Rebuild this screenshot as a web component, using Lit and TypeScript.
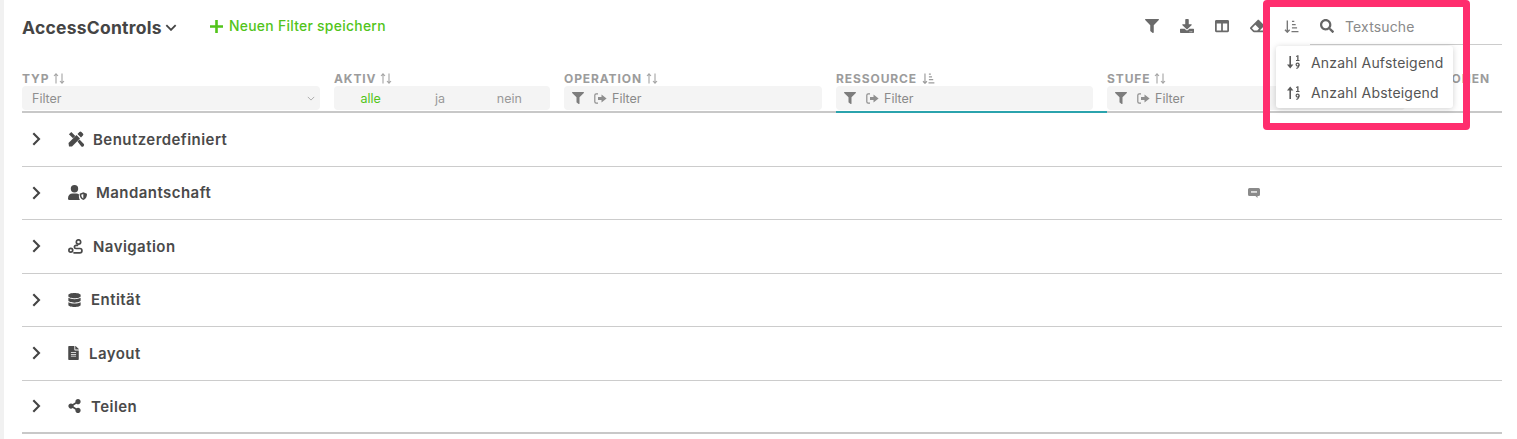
import { LitElement, html, css, svg } from "lit";
import { customElement } from "lit/decorators.js";

const FA = {
  filter: ["0 0 512 512", "M487.976 0H24.028C2.71 0-8.047 25.866 7.058 40.971L192 225.941V432c0 7.831 3.821 15.17 10.237 19.662l80 55.98C298.02 518.69 320 507.493 320 487.98V225.941l184.947-184.97C520.021 25.896 509.338 0 487.976 0z"],
  search: ["0 0 512 512", "M505 442.7L405.3 343c-4.5-4.5-10.6-7-17-7H372c27.6-35.3 44-79.7 44-128C416 93.1 322.9 0 208 0S0 93.1 0 208s93.1 208 208 208c48.3 0 92.7-16.4 128-44v16.3c0 6.4 2.5 12.5 7 17l99.7 99.7c9.4 9.4 24.6 9.4 33.9 0l28.3-28.3c9.4-9.4 9.4-24.6.1-34zM208 336c-70.7 0-128-57.2-128-128 0-70.7 57.2-128 128-128 70.7 0 128 57.2 128 128 0 70.7-57.2 128-128 128z"],
  download: ["0 0 512 512", "M216 0h80c13.3 0 24 10.7 24 24v168h87.7c17.8 0 26.7 21.5 14.1 34.1L269.7 378.3c-7.5 7.5-19.8 7.5-27.3 0L90.1 226.1c-12.6-12.6-3.7-34.1 14.1-34.1H192V24c0-13.3 10.7-24 24-24zm296 376v112c0 13.3-10.7 24-24 24H24c-13.3 0-24-10.7-24-24V376c0-13.3 10.7-24 24-24h146.7l49 49c20.1 20.1 52.5 20.1 72.6 0l49-49H488c13.3 0 24 10.7 24 24zm-124 88c0-11-9-20-20-20s-20 9-20 20 9 20 20 20 20-9 20-20zm64 0c0-11-9-20-20-20s-20 9-20 20 9 20 20 20 20-9 20-20z"],
  columns: ["0 0 512 512", "M464 32H48C21.49 32 0 53.49 0 80v352c0 26.51 21.49 48 48 48h416c26.51 0 48-21.49 48-48V80c0-26.51-21.49-48-48-48zM224 416H64V160h160v256zm224 0H288V160h160v256z"],
  eraser: ["0 0 512 512", "M497.941 273.941c18.745-18.745 18.745-49.137 0-67.882l-160-160c-18.745-18.745-49.136-18.746-67.883 0l-256 256c-18.745 18.745-18.745 49.137 0 67.882l96 96A48.004 48.004 0 0 0 144 480h356c6.627 0 12-5.373 12-12v-40c0-6.627-5.373-12-12-12H355.883l142.058-142.059zm-302.627-62.627l137.373 137.373L265.373 416H150.628l-80-80 124.686-124.686z"],
  file: ["0 0 384 512", "M224 136V0H24C10.7 0 0 10.7 0 24v464c0 13.3 10.7 24 24 24h336c13.3 0 24-10.7 24-24V160H248c-13.2 0-24-10.8-24-24zm64 236c0 6.6-5.4 12-12 12H108c-6.6 0-12-5.4-12-12v-8c0-6.6 5.4-12 12-12h168c6.6 0 12 5.4 12 12v8zm0-64c0 6.6-5.4 12-12 12H108c-6.6 0-12-5.4-12-12v-8c0-6.6 5.4-12 12-12h168c6.6 0 12 5.4 12 12v8zm0-72v8c0 6.6-5.4 12-12 12H108c-6.6 0-12-5.4-12-12v-8c0-6.6 5.4-12 12-12h168c6.6 0 12 5.4 12 12zm96-114.1v6.1H256V0h6.1c6.4 0 12.5 2.5 17 7l97.9 98c4.5 4.5 7 10.6 7 16.9z"],
  share: ["0 0 448 512", "M352 320c-22.608 0-43.387 7.819-59.79 20.895l-102.486-64.054a96.551 96.551 0 0 0 0-41.683l102.486-64.054C308.613 184.181 329.392 192 352 192c53.019 0 96-42.981 96-96S405.019 0 352 0s-96 42.981-96 96c0 7.158.79 14.13 2.276 20.841L155.79 180.895C139.387 167.819 118.608 160 96 160c-53.019 0-96 42.981-96 96s42.981 96 96 96c22.608 0 43.387-7.819 59.79-20.895l102.486 64.054A96.301 96.301 0 0 0 256 416c0 53.019 42.981 96 96 96s96-42.981 96-96-42.981-96-96-96z"],
  database: ["0 0 448 512", "M448 73.143v45.714C448 159.143 347.667 192 224 192S0 159.143 0 118.857V73.143C0 32.857 100.333 0 224 0s224 32.857 224 73.143zM448 176v102.857C448 319.143 347.667 352 224 352S0 319.143 0 278.857V176c48.125 33.143 136.208 48.572 224 48.572S399.874 209.143 448 176zm0 160v102.857C448 479.143 347.667 512 224 512S0 479.143 0 438.857V336c48.125 33.143 136.208 48.572 224 48.572S399.874 369.143 448 336z"],
} as const;

const fa = (k: keyof typeof FA, w: number, h: number = w) =>
  html`<svg class="ic" width=${w} height=${h} viewBox=${FA[k][0]} fill="currentColor"><path d=${FA[k][1]}></path></svg>`;

const sortArrows = html`<svg class="ic arrows" width="12" height="11" viewBox="0 0 12 11" fill="none" stroke="currentColor" stroke-width="1.1">
  <path d="M3 10.5V1M1 3l2-2.2L5 3M9 .5V10M7 8l2 2.2L11 8"></path></svg>`;

const sortAmount = (w: number, h: number) => html`<svg class="ic" width=${w} height=${h} viewBox="0 0 16 14" fill="none" stroke="currentColor" stroke-width="1.5">
  <path d="M3.5 0.500V13M1 10.500l2.500 2.600 2.500-2.600"></path>
  <path d="M8.500 1.500h2.500M8.500 5h4M8.500 8.500h5.500M8 12.500h7.500"></path></svg>`;

const sortNumeric = (up: boolean) => html`<svg class="ic" width="13" height="14" viewBox="0 0 13 14" fill="currentColor">
  ${up
    ? svg`<path d="M3.2 13V2" stroke="currentColor" stroke-width="1.6"></path><path d="M0 4.4L3.2 .6l3.2 3.8z"></path>`
    : svg`<path d="M3.2 1v11" stroke="currentColor" stroke-width="1.6"></path><path d="M0 9.6l3.2 3.8 3.2-3.8z"></path>`}
  <path d="M9 1l1.6-.8h.9V5h1v1H9V5h1.2V1.6L9 2z"></path>
  <circle cx="10.6" cy="9.6" r="1.5" fill="none" stroke="currentColor" stroke-width="1.2"></circle>
  <path d="M12 9.6c0 2-.8 3.4-2.6 3.9" fill="none" stroke="currentColor" stroke-width="1.2"></path></svg>`;

const signIn = html`<svg class="ic" width="13" height="11" viewBox="0 0 13 11" fill="none" stroke="currentColor">
  <path d="M4 .8H2.200Q.8.8.8 2.200v6.600q0 1.400 1.400 1.400H4" stroke-width="1.2"></path>
  <path d="M4 4h3.500V1.400L12.600 5.500 7.500 9.600V7H4z" fill="currentColor" stroke="none"></path></svg>`;

const tools = html`<svg class="ic" width="17" height="16" viewBox="0 0 17 16" fill="currentColor">
  <path d="M1 15.500L.5 12 8.500 4 12 7.500l-8 8zM9.500 3l1.900-1.900a1.400 1.400 0 0 1 2 0l1.500 1.500a1.400 1.400 0 0 1 0 2L13 6.500z"></path>
  <path d="M.9 3.300L3.300.9l4 4L5 7.300zM9.500 10.500l2-2 4.100 4.300a1.700 1.700 0 0 1-2.400 2.400z"></path>
</svg>`;

const userShield = html`<svg class="ic" width="19" height="15" viewBox="0 0 19 15" fill="currentColor">
  <circle cx="6.500" cy="3.800" r="3.700"></circle>
  <path d="M0 13.400C0 10.500 2 8.600 4.500 8.600h4c1 0 1.700.2 2.400.6v2.300c0 1.300.3 2.500 1 3.500H1.400A1.400 1.400 0 0 1 0 13.400z"></path>
  <path fill-rule="evenodd" d="M15.300 7.300l3.700 1.500c0 3-.9 5-3.700 6.200-2.800-1.200-3.700-3.200-3.700-6.200zm0 1.700l-2 .8c.1 1.800.6 2.900 2 3.700z"></path>
</svg>`;

const route = html`<svg class="ic" width="15" height="15" viewBox="0 0 15 15" fill="none" stroke="currentColor" stroke-width="1.700">
  <circle cx="10.500" cy="3" r="2.200"></circle>
  <circle cx="2.800" cy="11.300" r="1.900"></circle>
  <path d="M6 13.800h5.800a2 2 0 0 0 0-4.300H8a1.600 1.600 0 0 1 0-3.200h1.500" stroke-linecap="round"></path>
</svg>`;

const chevron = html`<svg class="ic" width="9" height="14" viewBox="0 0 9 14" fill="none" stroke="currentColor" stroke-width="2.100">
  <path d="M1.300 1.200L7 7l-5.700 5.800"></path></svg>`;

const smallDown = (w: number, h: number, sw: number) => html`<svg class="ic" width=${w} height=${h} viewBox="0 0 10 6" fill="none" stroke="currentColor" stroke-width=${sw}>
  <path d="M1 1l4 4 4-4"></path></svg>`;

const comment = html`<svg class="ic" width="12" height="10" viewBox="0 0 12 10">
  <path fill="#8a8a8a" d="M1.500 0h9A1.500 1.500 0 0 1 12 1.500v5A1.500 1.500 0 0 1 10.500 8H9.500v2L7.500 8h-6A1.500 1.500 0 0 1 0 6.500v-5A1.500 1.500 0 0 1 1.500 0z"></path>
  <path fill="#fff" d="M3 3.300h6v1.300H3z"></path></svg>`;

const rows = [
  { icon: tools, label: "Benutzerdefiniert", gap: 8 },
  { icon: userShield, label: "Mandantschaft", gap: 9, note: true },
  { icon: route, label: "Navigation", gap: 10 },
  { icon: fa("database", 13, 14), label: "Entität", gap: 10 },
  { icon: fa("file", 11, 14), label: "Layout", gap: 10 },
  { icon: fa("share", 13, 14), label: "Teilen", gap: 10 },
];

@customElement("app-root")
export class AppRoot extends LitElement {
  static styles = css`
    :host {
      display: block;
      position: relative;
      height: 439px;
      overflow: hidden;
      background: #f1f1f1;
      font-family: Inter, "Liberation Sans", sans-serif;
      color: #4a4a4a;
    }
    .ic { display: block; flex: none; }
    .panel {
      margin-left: 4px;
      height: 439px;
      background: #fff;
      padding: 0 15px 0 18px;
      box-sizing: border-box;
    }
    .top { display: flex; align-items: flex-start; height: 45px; }
    .title {
      display: flex; align-items: center; gap: 3px;
      margin-top: 17px; height: 20px; width: 156px; white-space: nowrap;
      font-size: 17.5px; font-weight: 700; color: #454545; letter-spacing: .25px;
    }
    .save {
      display: flex; align-items: center; gap: 6px;
      margin: 17px 0 0 32px; height: 18px; white-space: nowrap;
      font-size: 13.9px; font-weight: 500; color: #52c41a;
      letter-spacing: .28px;
    }
    .tools {
      margin-left: auto; display: flex; align-items: center;
      margin-top: 19px; color: #6a6a6a; gap: 21px;
    }
    .sortbtn { margin-left: 20px; margin-top: 20px; color: #777; }
    .search {
      width: 192px; height: 45px; margin-left: 11px; box-sizing: border-box;
      border-bottom: 1px solid #ccc; display: flex; align-items: center;
      padding: 8px 0 0 10px; gap: 11px;
      font-size: 14px; color: #8a8a8a; letter-spacing: .15px;
    }
    .search .ic { color: #666; }
    .cols {
      display: grid; grid-template-columns: 312px 230px 272px 271px 312px 83px;
      margin-top: 25px; border-bottom: 2px solid #c8c8c8; height: 41px;
    }
    .col { position: relative; box-sizing: border-box; height: 41px; }
    .label {
      display: flex; align-items: center; gap: 4px; height: 16px;
      font-size: 12px; font-weight: 700; color: #9c9c9c; white-space: nowrap;
      letter-spacing: .9px;
    }
    .label .arrows { color: #a5a5a5; }
    .field {
      height: 24px; border-radius: 4px; background: #f4f4f4; margin-right: 14px;
      display: flex; align-items: center; box-sizing: border-box;
      font-size: 12.5px; color: #8a8a8a;
    }
    .select { padding: 0 5px 0 10px; justify-content: space-between; color: #8f8f8f; }
    .select .ic { color: #aaa; }
    .seg { padding: 0 6px 0 2px; color: #999; }
    .seg span { flex: 1; text-align: center; }
    .seg .on { color: #52c41a; }
    .txt { padding-left: 8px; }
    .txt .fi { color: #7d7d7d; margin-right: 10px; }
    .txt .si { color: #8f8f8f; margin-right: 5px; }
    .col.sel::after {
      content: ""; position: absolute; left: 0; right: 0; bottom: -2px; height: 2px;
      background: #2ba3ad;
    }
    .row {
      display: grid; grid-template-columns: 1085px 1fr;
      height: 53.5px; box-sizing: border-box; align-items: center;
      border-bottom: 1px solid #ccc; color: #4a4a4a;
    }
    .row:last-child { border-bottom: 2px solid #c8c8c8; }
    .name {
      display: flex; align-items: center; padding-left: 10px;
      font-size: 15px; font-weight: 600; letter-spacing: .45px;
    }
    .name .chev { width: 36px; flex: none; color: #444; }
    .note { padding-left: 141px; }
    .menu {
      position: absolute; left: 1276px; top: 46px; width: 177px; height: 62px;
      background: #fff; border-radius: 3px;
      box-shadow: 0 1px 6px rgba(0,0,0,.18);
      padding: 1px 0; box-sizing: border-box; font-size: 14px; color: #555;
      letter-spacing: .2px; z-index: 2;
    }
    .mi { display: flex; align-items: center; height: 30.5px; padding-left: 11px; gap: 11px; white-space: nowrap; }
    .mi .ic { color: #5a5a5a; }
    .mark {
      position: absolute; left: 1263px; top: 0; width: 207px; height: 130px;
      box-sizing: border-box; border: 7px solid #ff2d6e; border-radius: 4px;
      pointer-events: none; z-index: 3;
    }
  `;

  render() {
    const filterField = html`<div class="field txt"><span class="fi">${fa("filter", 12)}</span><span class="si">${signIn}</span>Filter</div>`;
    return html`
      <div class="panel">
        <div class="top">
          <div class="title">AccessControls ${smallDown(12, 7, 1.6)}</div>
          <div class="save">
            <svg class="ic" width="13" height="13" viewBox="0 0 13 13" fill="currentColor"><path d="M5.200 0h2.600v5.200H13v2.600H7.800V13H5.200V7.800H0V5.200h5.200z"></path></svg>
            Neuen Filter speichern
          </div>
          <div class="tools">
            ${fa("filter", 14)}${fa("download", 14)}${fa("columns", 14)}${fa("eraser", 14)}
          </div>
          <div class="sortbtn">${sortAmount(15, 13)}</div>
          <div class="search">${fa("search", 14)}<span>Textsuche</span></div>
        </div>

        <div class="cols">
          <div class="col"><div class="label">TYP ${sortArrows}</div>
            <div class="field select">Filter ${smallDown(8, 5, 1.2)}</div></div>
          <div class="col"><div class="label">AKTIV ${sortArrows}</div>
            <div class="field seg"><span class="on">alle</span><span>ja</span><span>nein</span></div></div>
          <div class="col"><div class="label">OPERATION ${sortArrows}</div>${filterField}</div>
          <div class="col sel"><div class="label">RESSOURCE ${sortAmount(15, 11)}</div>${filterField}</div>
          <div class="col"><div class="label">STUFE ${sortArrows}</div>${filterField}</div>
          <div class="col"><div class="label">AKTIONEN</div></div>
        </div>

        ${rows.map(r => html`
          <div class="row">
            <div class="name">
              <span class="chev">${chevron}</span>
              <span style="margin-right:${r.gap}px">${r.icon}</span>
              ${r.label}
            </div>
            <div class="note">${r.note ? comment : ""}</div>
          </div>`)}
      </div>

      <div class="menu">
        <div class="mi">${sortNumeric(false)}Anzahl Aufsteigend</div>
        <div class="mi">${sortNumeric(true)}Anzahl Absteigend</div>
      </div>
      <div class="mark"></div>
    `;
  }
}
